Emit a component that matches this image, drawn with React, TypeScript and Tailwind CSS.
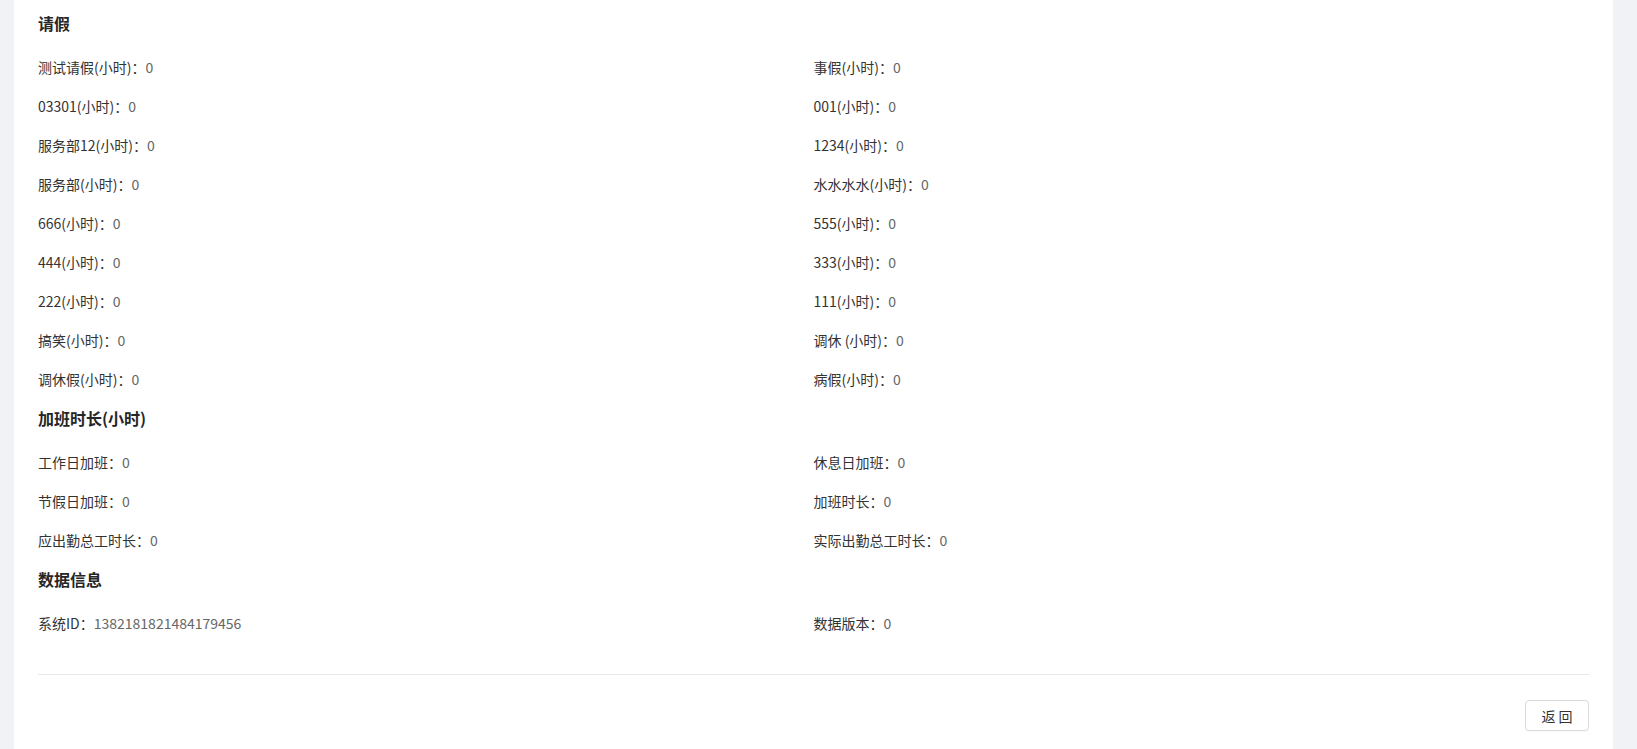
import React from 'react';

type Item = { label: string; value: string };

const leaveItems: Item[] = [
  { label: '测试请假(小时)', value: '0' },
  { label: '事假(小时)', value: '0' },
  { label: '03301(小时)', value: '0' },
  { label: '001(小时)', value: '0' },
  { label: '服务部12(小时)', value: '0' },
  { label: '1234(小时)', value: '0' },
  { label: '服务部(小时)', value: '0' },
  { label: '水水水水(小时)', value: '0' },
  { label: '666(小时)', value: '0' },
  { label: '555(小时)', value: '0' },
  { label: '444(小时)', value: '0' },
  { label: '333(小时)', value: '0' },
  { label: '222(小时)', value: '0' },
  { label: '111(小时)', value: '0' },
  { label: '搞笑(小时)', value: '0' },
  { label: '调休 (小时)', value: '0' },
  { label: '调休假(小时)', value: '0' },
  { label: '病假(小时)', value: '0' },
];

const overtimeItems: Item[] = [
  { label: '工作日加班', value: '0' },
  { label: '休息日加班', value: '0' },
  { label: '节假日加班', value: '0' },
  { label: '加班时长', value: '0' },
  { label: '应出勤总工时长', value: '0' },
  { label: '实际出勤总工时长', value: '0' },
];

const dataItems: Item[] = [
  { label: '系统ID', value: '1382181821484179456' },
  { label: '数据版本', value: '0' },
];

const Section = ({ title, items }: { title: string; items: Item[] }) => (
  <div>
    <h3 className="pt-2 pb-3 text-base leading-6 font-bold text-[#262626]">{title}</h3>
    <div className="grid grid-cols-2">
      {items.map((item, i) => (
        <div key={i} className="h-[39px] flex items-center text-sm">
          <span className="text-[#333]">{item.label}：</span>
          <span className="text-[#666]">{item.value}</span>
        </div>
      ))}
    </div>
  </div>
);

const App = () => {
  return (
    <div
      className="min-h-screen bg-[#f0f2f5] pl-[14px] pr-[24px]"
      style={{ fontFamily: '"Noto Sans CJK SC", "Liberation Sans", sans-serif' }}
    >
      <div className="bg-white min-h-screen px-6 pt-[3px] pb-[18px]">
        <Section title="请假" items={leaveItems} />
        <Section title="加班时长(小时)" items={overtimeItems} />
        <Section title="数据信息" items={dataItems} />

        <div className="mt-[32px] border-t border-[#e8e8e8]" />

        <div className="flex justify-end mt-[25px]">
          <button className="h-[31px] w-[64px] rounded border border-[#d9d9d9] bg-white text-sm text-[#333] shadow-[0_2px_0_rgba(0,0,0,0.015)]">
            返 回
          </button>
        </div>
      </div>
    </div>
  );
};

export default App;
